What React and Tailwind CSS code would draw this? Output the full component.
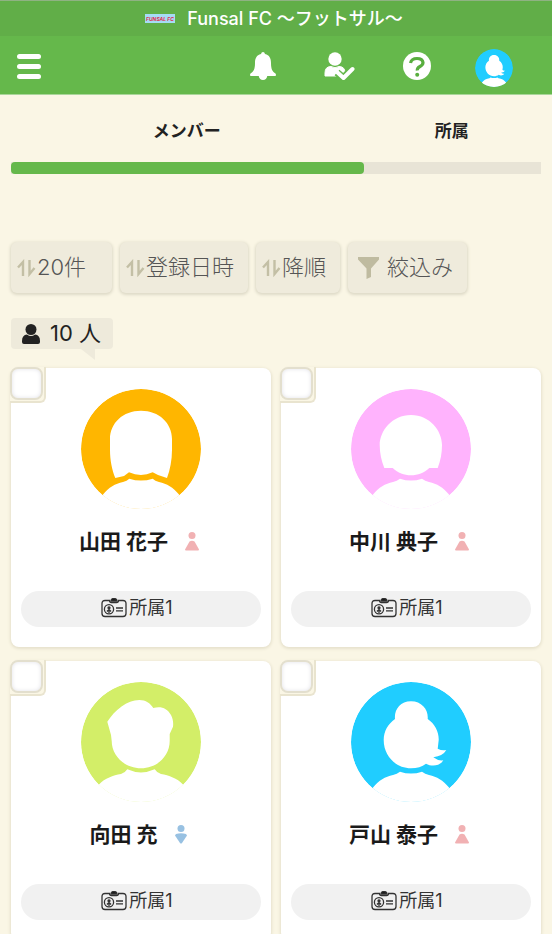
import React, { useState } from "react";

// Demo data (replace with API later)
const initialMembers = [
  { id: 1, name: "山田 花子", gender: "female", avatar: "long", group: "所属1" },
  { id: 2, name: "中川 典子", gender: "female", avatar: "bob", group: "所属1" },
  { id: 3, name: "向田 充", gender: "male", avatar: "short", group: "所属1" },
  { id: 4, name: "戸山 泰子", gender: "female", avatar: "bun", group: "所属1" },
];

const sorts = [
  { id: "limit", label: "表示件数", options: ["20件", "50件", "100件"] },
  { id: "sort", label: "並び替え", options: ["登録日時", "名前"] },
  { id: "order", label: "順序", options: ["降順", "昇順"] },
];

const avatars = {
  long: {
    color: "#ffb600",
    head: "M34.3 89C31 81 29 71 29 61V50C29 34 42 21.7 60 21.7S91 34 91 50V61C91 71 89 81 86 89L77 86L71.7 83.3Q60 88.5 48 83.3L43 87Z",
    body: "M22 105.5C28 98 34 95 42 93Q46 92 48.3 89.7Q60 93.5 71.7 89.7Q74 92 78 93C86 95 92 98 98 105.5L98 122H22Z",
  },
  bob: {
    color: "#ffb3fd",
    head: "M33.3 79C30.5 72 28.7 64 28.7 56C28.7 42 41 26 60 26S91 42 91 56C91 64 89.5 72 86.7 79H78.3C73 84 67 86.3 60 86.3S47 84 41.7 79Z",
    body: "M22 105.5C28 98 34 95 42 93Q46 92 49 89.7Q60 93.5 71 89.7Q74 92 78 93C86 95 92 98 98 105.5L98 122H22Z",
  },
  short: {
    color: "#d3ee68",
    head: "M26.3 39.7C34 28 46 18 58.3 18C65 18 69 21 72.3 26C80 24 86 26 90 33C92 37 92.5 41 92 44.7L88.7 52V59C88.7 74 76 86.3 60 86.3S30.7 74 30.7 59L30 53Z",
    body: "M18 102.5C24 96 32 93.5 40 92Q44 91 46.3 87.3Q60 93.5 73.7 87.3Q76 91 80 92C88 93.5 96 96 102 102.5L104 122H16Z",
  },
  bun: {
    color: "#20cdff",
    head: "M44 37C43 28 49 19.3 60 19.3S77.5 28 76.7 37C84 42 88 50 87.7 58L86.7 66.7Q91 69 95.3 68Q92 74 82.3 75.3Q87 79 92.3 78.3C89 84 81 85 75 81.7C71 85 66 86.3 60 86.3C45 86.3 32.7 74 32.7 58C32.7 49 37 42 44 37Z",
    body: "M22 105.5C28 98 34 95 42 93Q46 92 49 89.7Q60 93.5 71 89.7Q74 92 78 93C86 95 92 98 98 105.5L98 122H22Z",
  },
};

function Avatar({ type, className }) {
  const a = avatars[type];
  return (
    <svg viewBox="0 0 120 120" className={`rounded-full ${className}`} aria-hidden="true">
      <circle cx="60" cy="60" r="60" fill={a.color} />
      <path d={a.head} fill="#fff" />
      <path d={a.body} fill="#fff" />
    </svg>
  );
}

function SortIcon() {
  return (
    <svg viewBox="0 0 19 18" className="h-[18px] w-[19px]" fill="none" stroke="#c3bfa5" strokeWidth="2.4" aria-hidden="true">
      <path d="M1 8.5L6 3V17" />
      <path d="M12.5 1V15L17.5 9" />
    </svg>
  );
}

function GenderIcon({ gender }) {
  if (gender === "male") {
    return (
      <svg viewBox="0 0 14 20" className="h-5 w-3.5" fill="#98c1e2" role="img" aria-label="男性">
        <circle cx="7" cy="3.5" r="3.5" />
        <path d="M2 9Q7 7.5 12 9L13 10.5L8 18Q7 19 6 18L1 10.5Z" />
      </svg>
    );
  }
  return (
    <svg viewBox="0 0 14 20" className="h-5 w-3.5" fill="#f1b1b3" role="img" aria-label="女性">
      <circle cx="7" cy="3.5" r="3.5" />
      <path d="M4.5 9.5Q7 8 9.500 9.5L14 17.500Q14 18.500 13 18.500H1Q0 18.500 0 17.500Z" />
    </svg>
  );
}

function CardIcon() {
  return (
    <svg viewBox="0 0 26 20" className="h-5 w-[26px]" fill="none" stroke="#333" strokeWidth="1.3" aria-hidden="true">
      <path d="M8.5 2.5H4Q1 2.5 1 5.5V15.500Q1 18.500 4 18.500H22Q25 18.500 25 15.500V5.5Q25 2.5 22 2.5H17.5Q17.5 4.5 15.5 4.5H10.5Q8.5 4.5 8.5 2.5Z" />
      <path d="M10 3Q10 .5 13 .5T16 3Z" fill="#111" />
      <circle cx="8" cy="11.2" r="4.6" />
      <circle cx="8" cy="9.8" r="1" fill="#333" />
      <path d="M8 11V15M6 13.5Q8 11 10 13.5M15 10H22M15 12.8H22" />
    </svg>
  );
}

function MemberCard({ member, checked, onToggle }) {
  return (
    <li className="relative flex flex-col items-center rounded-lg bg-white px-2.5 pt-[21px] pb-5 shadow-[0_1px_3px_1px_#e6e1cc]">
      <label className="absolute -top-px -left-px size-9 rounded-br-md border-r-2 border-b-2 border-[#e9e4cf] bg-[#faf6e5]">
        <input
          type="checkbox"
          checked={checked}
          onChange={onToggle}
          aria-label={member.name}
          className="block size-[33px] appearance-none rounded-lg border-2 border-[#e3dfce] bg-white shadow-[inset_0_0_4px_#e2e2e8] checked:bg-[#65b84b]"
        />
      </label>
      <Avatar type={member.avatar} className="size-[120px]" />
      <div className="mt-[17px] flex h-8 items-center gap-[17px] pr-1">
        <h2 className="text-[21px] leading-8 font-bold text-[#1a1a1a]">{member.name}</h2>
        <GenderIcon gender={member.gender} />
      </div>
      <div className="mt-[33px] flex h-9 w-full items-center justify-center gap-0.5 rounded-full bg-[#f1f1f1] pr-2 pb-0.5 text-lg text-[#333]">
        <CardIcon />
        <span>{member.group}</span>
      </div>
    </li>
  );
}

export default function App() {
  const [tab, setTab] = useState("members");
  const [selected, setSelected] = useState([]);

  const onToggle = (id) => {
    setSelected((prev) => (prev.includes(id) ? prev.filter((s) => s !== id) : [...prev, id]));
  };

  return (
    <div className="flex h-screen flex-col bg-[#faf6e5] font-['Inter','Noto_Sans_CJK_JP',sans-serif] text-[#222]">
      {/* Team name */}
      <div className="flex h-9 shrink-0 items-center justify-center gap-3 border-t border-[#8fb283] bg-[#61ae48] pr-1 text-white">
        <svg viewBox="0 0 30 9" className="h-[9px] w-[30px]" aria-hidden="true">
          <rect width="30" height="9" fill="#a5dcf5" />
          <text x="15" y="6.500" textAnchor="middle" fontSize="5" fontWeight="700" fontStyle="italic" fill="#e0304f">
            FUNSAL FC
          </text>
        </svg>
        <h1 className="text-lg leading-6 font-medium">Funsal FC ～フットサル～</h1>
      </div>

      {/* Header */}
      <header className="flex h-[59px] shrink-0 items-center justify-between border-b border-[#a9d69a] bg-[#65b84b] pt-0.5 pr-5 pl-[17px]">
        <button type="button" aria-label="メニュー" className="flex w-6 flex-col gap-[5px]">
          <span className="h-[5px] w-full rounded-full bg-white" />
          <span className="h-[5px] w-full rounded-full bg-white" />
          <span className="h-[5px] w-full rounded-full bg-white" />
        </button>
        <nav className="flex items-center">
          <button type="button" aria-label="お知らせ" className="flex w-[77px] justify-center">
            <svg viewBox="0 0 26 28" className="h-7 w-[26px]" fill="#fff" aria-hidden="true">
              <path d="M13 0Q14.6 0 15 2C19.5 3 21 6.5 21 11C21 17.5 22.5 19.5 25.5 21.5Q26 22 26 23.2Q26 24 25 24H17.3Q16.5 28 13 28T8.7 24H1Q0 24 0 23.2Q0 22 .5 21.5C3.5 19.5 5 17.5 5 11C5 6.5 6.5 3 11 2Q11.4 0 13 0Z" />
            </svg>
          </button>
          <button type="button" aria-label="出欠" className="flex w-[77px] justify-center">
            <svg viewBox="0 0 31 29" className="h-[29px] w-[31px]" aria-hidden="true">
              <circle cx="11" cy="7" r="6.7" fill="#fff" />
              <path d="M1 24V21Q1 14.5 7 14.5Q11 17 15 14.5Q21 14.5 21 21V24Z" fill="#fff" stroke="#fff" strokeLinejoin="round" />
              <path d="M13 20.5L19.5 26L28.5 17" fill="none" stroke="#65b84b" strokeWidth="7.5" strokeLinejoin="round" />
              <path d="M13 20L19.5 26L28.5 17" fill="none" stroke="#fff" strokeWidth="4" strokeLinecap="round" strokeLinejoin="round" />
            </svg>
          </button>
          <button type="button" aria-label="ヘルプ" className="flex w-[77px] justify-center">
            <svg viewBox="0 0 28 28" className="size-7" aria-hidden="true">
              <circle cx="14" cy="14" r="14" fill="#fff" />
              <path d="M7.5 11Q8.5 6.5 14 6.500T20 10.500Q20 13 17 14.5T14.300 18.500" fill="none" stroke="#58ae3e" strokeWidth="3.200" />
              <circle cx="14.2" cy="22.8" r="2" fill="#58ae3e" />
            </svg>
          </button>
          <button type="button" aria-label="マイページ" className="flex w-[77px] justify-center pt-1">
            <Avatar type="bun" className="size-[38px]" />
          </button>
        </nav>
      </header>

      <main className="min-h-0 flex-1 overflow-y-auto px-[11px] pb-4 [scrollbar-width:none]">
        {/* Tabs */}
        <div role="tablist" className="grid grid-cols-[2fr_1fr] pt-5">
          {[
            { id: "members", label: "メンバー" },
            { id: "groups", label: "所属" },
          ].map((t) => (
            <button
              key={t.id}
              type="button"
              role="tab"
              aria-selected={tab === t.id}
              onClick={() => setTab(t.id)}
              className="flex flex-col text-[17px] leading-8 font-bold"
            >
              <span className="w-full pr-0.5 text-center">{t.label}</span>
              <span className="mt-[15px] block h-3 w-full bg-[#e8e4d6]">
                {tab === t.id && <span className="block h-full rounded bg-[#65b84b]" />}
              </span>
            </button>
          ))}
        </div>

        {/* Filters */}
        <div className="mt-[68px] flex gap-2 text-[22px] font-light text-[#555]">
          {sorts.map((s) => (
            <label
              key={s.id}
              className="flex h-[51px] items-center gap-px rounded-md bg-[#efebdc] pr-[13px] pl-1.5 shadow-[0_1px_3px_1px_#dedac8] first:min-w-[101px]"
            >
              <SortIcon />
              <select aria-label={s.label} className="appearance-none bg-transparent outline-none">
                {s.options.map((o) => (
                  <option key={o}>{o}</option>
                ))}
              </select>
            </label>
          ))}
          <button
            type="button"
            className="flex h-[51px] items-center gap-2 rounded-md bg-[#efebdc] pr-3.5 pl-2.5 shadow-[0_1px_3px_1px_#dedac8]"
          >
            <svg viewBox="0 0 21 22" className="h-[22px] w-[21px]" fill="#bfbba0" aria-hidden="true">
              <path d="M0 0H21V2.5L13 11.5V20L8.5 22V11.5L0 2.5Z" />
            </svg>
            絞込み
          </button>
        </div>

        {/* Count */}
        <div className="mt-[25px] flex">
          <p className="relative flex h-[31px] items-center gap-2.5 rounded bg-[#eeeadb] pr-3 pl-[11px] text-[22px] text-[#222]">
            <svg viewBox="0 0 18 20" className="h-5 w-[18px]" fill="#222" aria-hidden="true">
              <circle cx="9" cy="5.5" r="5.5" />
              <path d="M0 17Q0 11 5 10.5Q9 13.5 13 10.5Q18 11 18 17V18Q18 20 16 20H2Q0 20 0 18Z" />
            </svg>
            10 人
            <svg viewBox="0 0 14 11" className="absolute top-full right-[18px] h-[11px] w-3.5" fill="#eeeadb" aria-hidden="true">
              <path d="M0 0H14V11Z" />
            </svg>
          </p>
        </div>

        {/* Members */}
        <ul className="mt-[19px] grid grid-cols-2 gap-x-2.5 gap-y-3.5">
          {initialMembers.map((m) => (
            <MemberCard
              key={m.id}
              member={m}
              checked={selected.includes(m.id)}
              onToggle={() => onToggle(m.id)}
            />
          ))}
        </ul>
      </main>
    </div>
  );
}
